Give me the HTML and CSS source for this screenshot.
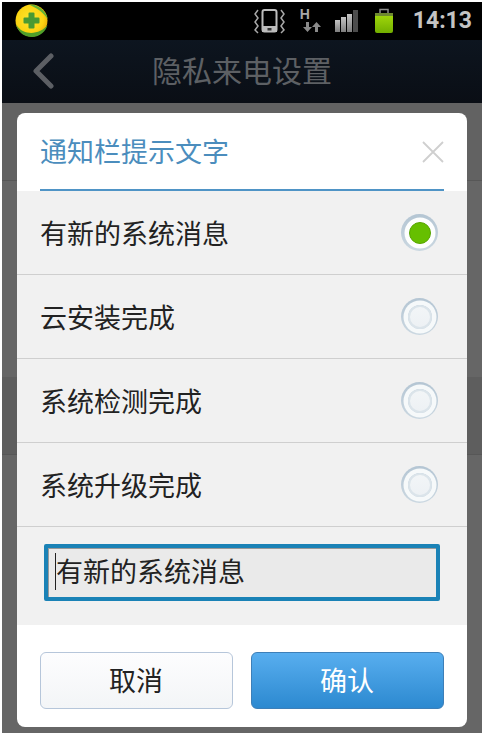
FILE: index.html
```html
<!DOCTYPE html>
<html lang="zh">
<head>
<meta charset="utf-8">
<title>隐私来电设置</title>
<link rel="stylesheet" href="styles.css">
</head>
<body>
<div class="screen">
  <div class="statusbar">
    <svg class="logo" width="33" height="33" viewBox="0 0 33 33">
      <defs>
        <radialGradient id="ball" cx="45%" cy="45%" r="60%">
          <stop offset="0" stop-color="#ffe62e"/>
          <stop offset="0.7" stop-color="#fbd312"/>
          <stop offset="1" stop-color="#e8ac06"/>
        </radialGradient>
      </defs>
      <circle cx="16.5" cy="16.5" r="16" fill="url(#ball)"/>
      <path d="M1 20C3 29 10 33 17 33C25 33 31 27 32.500 21C28 27 20 30 12 28.500C7 27.500 3 24 1 20Z" fill="#4f9f2a"/>
      <path d="M14 .5C20 0 27 3 31.500 11C32.500 13 32.500 14 32.500 15C29 9 22 4 14 .5Z" fill="#63b236"/>
      <path d="M14.500 9.500h4v5h5v4h-5v5h-4v-5h-5v-4h5z" fill="#4a9a33" stroke="#4a9a33" stroke-width="2" stroke-linejoin="round"/>
    </svg>
    <div class="status-icons">
      <svg class="vib" width="33" height="26" viewBox="0 0 33 26">
        <rect x="9.500" y="2" width="14" height="21.500" rx="2" fill="#000" stroke="#bdbdbd" stroke-width="2"/>
        <rect x="9" y="18" width="15" height="6" fill="#bdbdbd"/>
        <rect x="14.500" y="20" width="4" height="2.500" fill="#333"/>
        <path d="M5 2 2 6l3 4-3 4 3 4-3 4 3 3M28 2l3 4-3 4 3 4-3 4 3 4-3 3" fill="none" stroke="#a8a8a8" stroke-width="1.500"/>
      </svg>
      <div class="net">
        <span class="net-h">H</span>
        <svg class="net-arrows" width="20" height="10" viewBox="0 0 20 10">
          <path d="M4 0h3v5h3L5.500 10 1 5h3ZM13 10V5h-3l4.500-5L19 5h-3v5Z" fill="#8a8a8a"/>
        </svg>
      </div>
      <svg class="signal" width="24" height="22" viewBox="0 0 24 22">
        <defs>
          <linearGradient id="bar" x1="0" y1="0" x2="0" y2="1">
            <stop offset="0" stop-color="#c4c4c4"/>
            <stop offset="1" stop-color="#7e7e7e"/>
          </linearGradient>
        </defs>
        <rect x="1" y="10" width="5" height="12" fill="url(#bar)"/>
        <rect x="7" y="7" width="5" height="15" fill="url(#bar)"/>
        <rect x="13" y="4" width="5" height="18" fill="url(#bar)"/>
        <rect x="19" y="0" width="5" height="22" fill="#4c4c4c"/>
      </svg>
      <svg class="battery" width="20" height="26" viewBox="0 0 20 26">
        <defs>
          <linearGradient id="batt" x1="0" y1="0" x2="0" y2="1">
            <stop offset="0" stop-color="#a6dc0c"/>
            <stop offset="1" stop-color="#72ae00"/>
          </linearGradient>
        </defs>
        <path d="M6 6V1.500h8V6" fill="none" stroke="#8f8f8f" stroke-width="1.500"/>
        <rect x="1" y="5" width="18" height="20" rx="2" fill="url(#batt)"/>
        <rect x="1" y="5" width="18" height="3" fill="#6f8a30"/>
      </svg>
      <span class="clock">14:13</span>
    </div>
  </div>
  <header class="titlebar">
    <svg class="back" width="24" height="36" viewBox="0 0 24 36">
      <path d="M20 3 5 18l15 15" fill="none" stroke="#5c5f64" stroke-width="5" stroke-linecap="round" stroke-linejoin="round"/>
    </svg>
    <h1 class="page-title">隐私来电设置</h1>
  </header>
  <main class="behind">
    <div class="behind-row r1"></div>
    <div class="behind-row r2"></div>
    <div class="behind-row r3"></div>
  </main>

  <section class="dialog">
    <div class="dialog-head">
      <h2 class="dialog-title">通知栏提示文字</h2>
      <svg class="close" width="22" height="22" viewBox="0 0 22 22">
        <path d="M1 1 21 21M21 1 1 21" stroke="#cfcfcf" stroke-width="1.800" fill="none"/>
      </svg>
    </div>
    <div class="dialog-body">
      <div class="option"><span>有新的系统消息</span><i class="radio on"></i></div>
      <div class="option"><span>云安装完成</span><i class="radio"></i></div>
      <div class="option"><span>系统检测完成</span><i class="radio"></i></div>
      <div class="option"><span>系统升级完成</span><i class="radio"></i></div>
      <div class="input-wrap">
        <div class="input"><b class="caret"></b>有新的系统消息</div>
      </div>
    </div>
    <div class="dialog-foot">
      <button class="btn cancel">取消</button>
      <button class="btn ok">确认</button>
    </div>
  </section>
</div>
</body>
</html>
```
FILE: styles.css
```css
* { box-sizing: border-box; }
html, body { margin: 0; padding: 0; background: #fff; }
body { width: 482px; height: 735px; overflow: hidden; padding: 2px 0 2px 2px; font-family: "Roboto", "Noto Sans CJK SC", sans-serif; }
.screen { position: relative; width: 480px; height: 731px; display: flex; flex-direction: column; background: #666; }
.statusbar { height: 38px; background: #000; display: flex; align-items: center; justify-content: space-between; padding: 0 10px 0 13px; }
.logo { display: block; margin-top: -2px; }
.status-icons { display: flex; align-items: center; }
.vib { display: block; }
.net { width: 22px; margin-left: 14px; display: flex; flex-direction: column; align-items: flex-start; margin-top: -2px; }
.net-h { font: bold 14px/12px "Liberation Sans", sans-serif; color: #a8a8a8; }
.net-arrows { display: block; margin: 2px 0 0 2px; }
.signal { display: block; margin-left: 12px; }
.battery { display: block; margin-left: 16px; }
.clock { font: bold 23px/26px "Roboto", "Liberation Sans", sans-serif; color: #c4c4c4; margin-left: 19px; }
.titlebar { height: 63px; background: linear-gradient(#0d151f, #0a0e15); display: flex; align-items: center; justify-content: center; position: relative; }
.back { position: absolute; left: 29px; top: 13px; }
.page-title { margin: 0; font-size: 30px; font-weight: 400; color: #5d6064; line-height: 36px; }
.behind { flex: 1; }
.behind-row { border-bottom: 1px solid #575757; }
.r1 { height: 78px; background: #626262; }
.r2 { height: 196px; border-bottom: 0; }
.r3 { height: 78px; background: #5e5e5e; }
.dialog { position: absolute; left: 15px; top: 111px; width: 450px; height: 614px; background: #fff; border-radius: 8px; overflow: hidden; display: flex; flex-direction: column; }
.dialog-head { height: 78px; margin: 0 23px; border-bottom: 2px solid #4f94c6; display: flex; align-items: center; justify-content: space-between; padding-top: 4px; }
.dialog-title { margin: 0; font-size: 27px; font-weight: 400; color: #4b8dbd; line-height: 34px; }
.close { display: block; margin-top: -3px; }
.dialog-body { height: 434px; background: #f1f1f1; display: flex; flex-direction: column; }
.option { height: 84px; border-bottom: 1px solid #cfcfcf; display: flex; align-items: center; justify-content: space-between; padding: 0 29px 0 23px; font-size: 27px; color: #222; }
.radio { width: 37px; height: 37px; border-radius: 50%; display: flex; align-items: center; justify-content: center; background: linear-gradient(#b4c5d3, #cbd8e1); }
.radio::after { content: ""; width: 20px; height: 20px; border-radius: 50%; background: linear-gradient(#f2f5f7, #edf1f4); border: 2px solid #dbe4ea; box-shadow: 0 0 0 4.5px #f6f9fa; }
.radio.on::after { background: #66bf00; border: 1px solid #57a500; box-shadow: 0 0 0 4.5px #fdfefe; }
.input-wrap { flex: 1; padding: 17px 27px 0; }
.input { height: 57px; border: 4px solid #1a82b6; border-radius: 2px; background: #eaeaea; box-shadow: inset 1px 1px 0 #999; font-size: 27px; line-height: 51px; color: #222; padding-left: 8px; position: relative; }
.caret { position: absolute; left: 7px; top: 5px; width: 1px; height: 37px; background: #222; }
.dialog-foot { flex: 1; display: flex; gap: 18px; padding: 27px 23px 0; }
.btn { width: 193px; height: 57px; border-radius: 6px; font-family: inherit; font-size: 27px; padding: 0 1px 2px 0; }
.cancel { border: 1px solid #b6c6da; background: linear-gradient(#fdfdfe, #f3f5f7); color: #222; }
.ok { border: 1px solid #3d7fb8; background: linear-gradient(#58aeef, #2c89d0); color: #fff; }
```
